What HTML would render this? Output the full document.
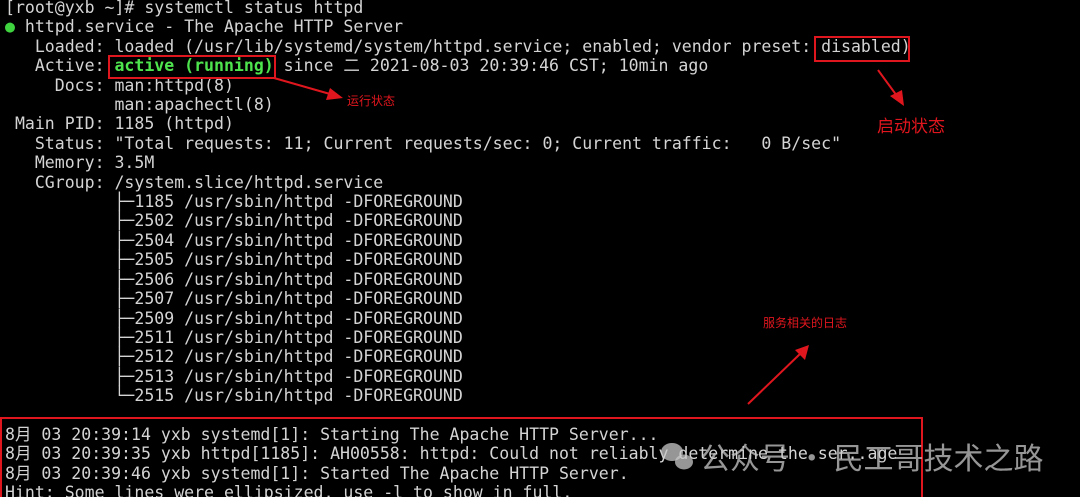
<!DOCTYPE html>
<html><head><meta charset="utf-8"><style>
html,body{margin:0;width:1080px;height:497px;background:#000;overflow:hidden;position:relative}
pre{margin:0;position:absolute;left:5px;top:-2px;font-family:"DejaVu Sans Mono","Noto Sans CJK SC",monospace;font-size:16.55px;line-height:19.4px;color:#d4d4d4}
.g{color:#4ee44e;font-weight:bold}
.b{color:#3fd43f}
.box{position:absolute;border:2px solid #e0161e}
.t{position:absolute;color:#e0161e;font-family:"Noto Sans CJK SC",sans-serif;white-space:nowrap}
.wm{position:absolute;left:700px;top:434px;color:rgba(200,200,200,.75);font-family:"Noto Sans CJK SC",sans-serif;font-size:30px;white-space:nowrap}
</style></head><body>
<pre>[root@yxb ~]# systemctl status httpd
<span class="b">●</span> httpd.service - The Apache HTTP Server
   Loaded: loaded (/usr/lib/systemd/system/httpd.service; enabled; vendor preset: disabled)
   Active: <span class="g">active (running)</span> since 二 2021-08-03 20:39:46 CST; 10min ago
     Docs: man:httpd(8)
           man:apachectl(8)
 Main PID: 1185 (httpd)
   Status: "Total requests: 11; Current requests/sec: 0; Current traffic:   0 B/sec"
   Memory: 3.5M
   CGroup: /system.slice/httpd.service
           ├─1185 /usr/sbin/httpd -DFOREGROUND
           ├─2502 /usr/sbin/httpd -DFOREGROUND
           ├─2504 /usr/sbin/httpd -DFOREGROUND
           ├─2505 /usr/sbin/httpd -DFOREGROUND
           ├─2506 /usr/sbin/httpd -DFOREGROUND
           ├─2507 /usr/sbin/httpd -DFOREGROUND
           ├─2509 /usr/sbin/httpd -DFOREGROUND
           ├─2511 /usr/sbin/httpd -DFOREGROUND
           ├─2512 /usr/sbin/httpd -DFOREGROUND
           ├─2513 /usr/sbin/httpd -DFOREGROUND
           └─2515 /usr/sbin/httpd -DFOREGROUND

8月 03 20:39:14 yxb systemd[1]: Starting The Apache HTTP Server...
8月 03 20:39:35 yxb httpd[1185]: AH00558: httpd: Could not reliably determine the ser..age
8月 03 20:39:46 yxb systemd[1]: Started The Apache HTTP Server.
Hint: Some lines were ellipsized, use -l to show in full.</pre>
<div class="box" style="left:108px;top:55px;width:164px;height:20px"></div>
<div class="box" style="left:814px;top:36px;width:92px;height:22px"></div>
<div class="box" style="left:0;top:417px;width:919px;height:90px"></div>
<svg width="1080" height="497" style="position:absolute;left:0;top:0">
<g fill="#e0161e" stroke="#e0161e" stroke-width="2">
<line x1="274" y1="78" x2="330" y2="94"/><polygon points="343,98 326,100 330,88" stroke="none"/>
<line x1="878" y1="70" x2="897" y2="96"/><polygon points="904,106 890,96 902,90" stroke="none"/>
<line x1="748" y1="404" x2="801" y2="353"/><polygon points="809,345 805,360 795,350" stroke="none"/>
</g>
<g fill="rgba(200,200,200,.75)"><ellipse cx="672" cy="452" rx="11" ry="9"/><ellipse cx="684" cy="462" rx="9" ry="7.5"/></g>
</svg>
<div class="t" style="left:347px;top:92px;font-size:12px">运行状态</div>
<div class="t" style="left:877px;top:112px;font-size:17px">启动状态</div>
<div class="t" style="left:763px;top:314px;font-size:12px">服务相关的日志</div>
<div class="wm">公众号 · 民工哥技术之路</div>
</body></html>
